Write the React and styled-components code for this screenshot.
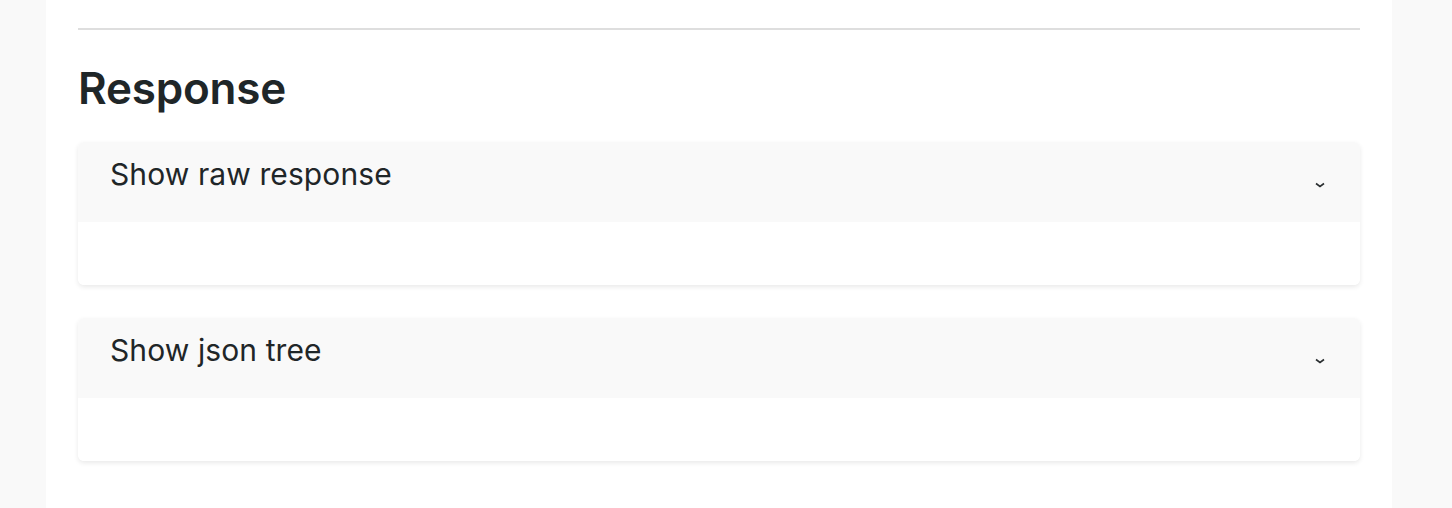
import React from "react";
import styled, { createGlobalStyle } from "styled-components";

const Global = createGlobalStyle`
  html, body { margin: 0; padding: 0; background: #f9f9f9; }
  body { font-family: Inter, "Helvetica Neue", Arial, sans-serif; color: #1f2628; }
`;

const Page = styled.div`
  display: flex;
  justify-content: flex-start;
  min-height: 508px;
  padding-left: 46px;
  padding-right: 60px;
  box-sizing: border-box;
`;

const Panel = styled.main`
  width: 1346px;
  background: #ffffff;
  padding: 28px 32px 40px;
  box-sizing: border-box;
  min-height: 508px;
`;

const Divider = styled.hr`
  border: none;
  height: 2px;
  background: #dedede;
  margin: 0;
`;

const Heading = styled.h2`
  font-size: 44px;
  font-weight: 600;
  letter-spacing: -0.2px;
  margin: 31px 0 27px;
  line-height: 54px;
  color: #1f2628;
`;

const Stack = styled.div`
  display: flex;
  flex-direction: column;
  gap: 33px;
`;

const Card = styled.section`
  border-radius: 6px;
  background: #fff;
  box-shadow: 0 2px 5px rgba(0, 0, 0, 0.09);
  overflow: hidden;
`;

const Header = styled.div`
  height: 80px;
  background: #f9f9f9;
  display: flex;
  align-items: flex-start;
  justify-content: space-between;
  padding: 13px 34px 0 32px;
  box-sizing: border-box;
`;

const Title = styled.span`
  font-size: 30px;
  line-height: 38px;
  font-weight: 400;
  letter-spacing: 0.1px;
  color: #1f2628;
`;

const Chevron = styled.svg`
  margin-top: 26px;
  width: 12px;
  height: 8px;
`;

const Body = styled.div`
  height: 63px;
  background: #fff;
`;

function Accordion({ title }) {
  return (
    <Card>
      <Header>
        <Title>{title}</Title>
        <Chevron viewBox="0 0 12 8">
          <path d="M2 2.5 L6 5.5 L10 2.5" fill="none" stroke="#2a2f31" strokeWidth="1.6" />
        </Chevron>
      </Header>
      <Body />
    </Card>
  );
}

export default function App() {
  return (
    <>
      <Global />
      <Page>
        <Panel>
          <Divider />
          <Heading>Response</Heading>
          <Stack>
            <Accordion title="Show raw response" />
            <Accordion title="Show json tree" />
          </Stack>
        </Panel>
      </Page>
    </>
  );
}
